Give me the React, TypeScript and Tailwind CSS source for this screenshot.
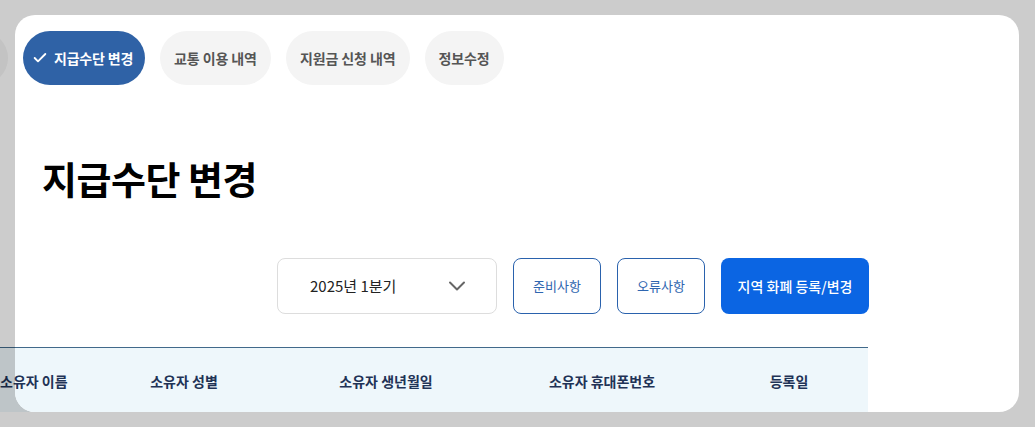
import { Check, ChevronDown } from 'lucide-react';

const tabs = ['교통 이용 내역', '지원금 신청 내역', '정보수정'];

const columns = [
  { name: '소유자 이름', w: 'w-[66px]' },
  { name: '소유자 성별', w: 'w-[236px]' },
  { name: '소유자 생년월일', w: 'w-[168px]' },
  { name: '소유자 휴대폰번호', w: 'w-[264px]' },
  { name: '등록일', w: 'w-[110px]' },
];

function Content({ className = '' }: { className?: string }) {
  return (
    <div className={`w-[868px] pt-[16px] ${className}`}>
      {/* tabs, scrolled a little to the left */}
      <div className="flex items-center gap-[15px]">
        <div className="-ml-[72px] h-[54px] w-[80px] shrink-0 rounded-full bg-[#f4f4f4]" />
        <button className="flex h-[54px] shrink-0 items-center gap-[6px] rounded-full bg-[#2f62a6] pl-[9px] pr-[12px] text-[14px] font-bold tracking-[-0.2px] text-white">
          <Check className="h-[16px] w-[16px]" strokeWidth={2.8} />
          지급수단 변경
        </button>
        {tabs.map((t) => (
          <button
            key={t}
            className="flex h-[54px] shrink-0 items-center rounded-full bg-[#f4f4f4] px-[14px] text-[14px] font-bold tracking-[-0.1px] text-[#555555]"
          >
            {t}
          </button>
        ))}
      </div>

      <h1 className="mt-[70px] pl-[42px] text-[38px] font-bold leading-[46px] tracking-[-0.5px] text-black">
        지급수단 변경
      </h1>

      <div className="-mr-[1px] mt-[57px] flex items-center justify-end gap-[16px]">
        <div className="flex h-[56px] w-[220px] items-center justify-between rounded-[8px] border border-[#dddddd] bg-white pl-[32px] pr-[25px] text-[15px] text-[#222222]">
          <span>2025년 1분기</span>
          <ChevronDown className="h-[28px] w-[28px] text-[#666666]" strokeWidth={1.7} />
        </div>
        <button className="h-[56px] w-[88px] rounded-[8px] border border-[#2a62ad] bg-white text-[13px] text-[#2f66b0]">
          준비사항
        </button>
        <button className="h-[56px] w-[88px] rounded-[8px] border border-[#2a62ad] bg-white text-[13px] text-[#2f66b0]">
          오류사항
        </button>
        <button className="h-[56px] w-[148px] rounded-[8px] bg-[#0b65e3] text-[14px] font-medium text-white">
          지역 화폐 등록/변경
        </button>
      </div>

      <div className="mt-[33px] flex h-[68px] items-center border-t border-[#41698a] bg-[#eef7fb] text-[14px] font-bold text-[#1f3356]">
        {columns.map((c) => (
          <div key={c.name} className={`${c.w} shrink-0 whitespace-nowrap text-center`}>
            {c.name}
          </div>
        ))}
      </div>
    </div>
  );
}

export default function App() {
  return (
    <div
      className="relative h-[427px] w-[1035px] overflow-hidden bg-white"
      style={{ fontFamily: '"Noto Sans CJK KR", "Noto Sans", sans-serif' }}
    >
      {/* page behind the dim layer */}
      <div className="absolute left-0 top-[15px] h-[397px] w-[1019px] overflow-hidden">
        <Content />
      </div>
      <div className="absolute inset-0 bg-black/20" />

      {/* panel */}
      <div className="absolute left-[15px] top-[15px] h-[397px] w-[1004px] overflow-hidden rounded-[20px] bg-white">
        <Content className="-ml-[15px]" />
      </div>
    </div>
  );
}
